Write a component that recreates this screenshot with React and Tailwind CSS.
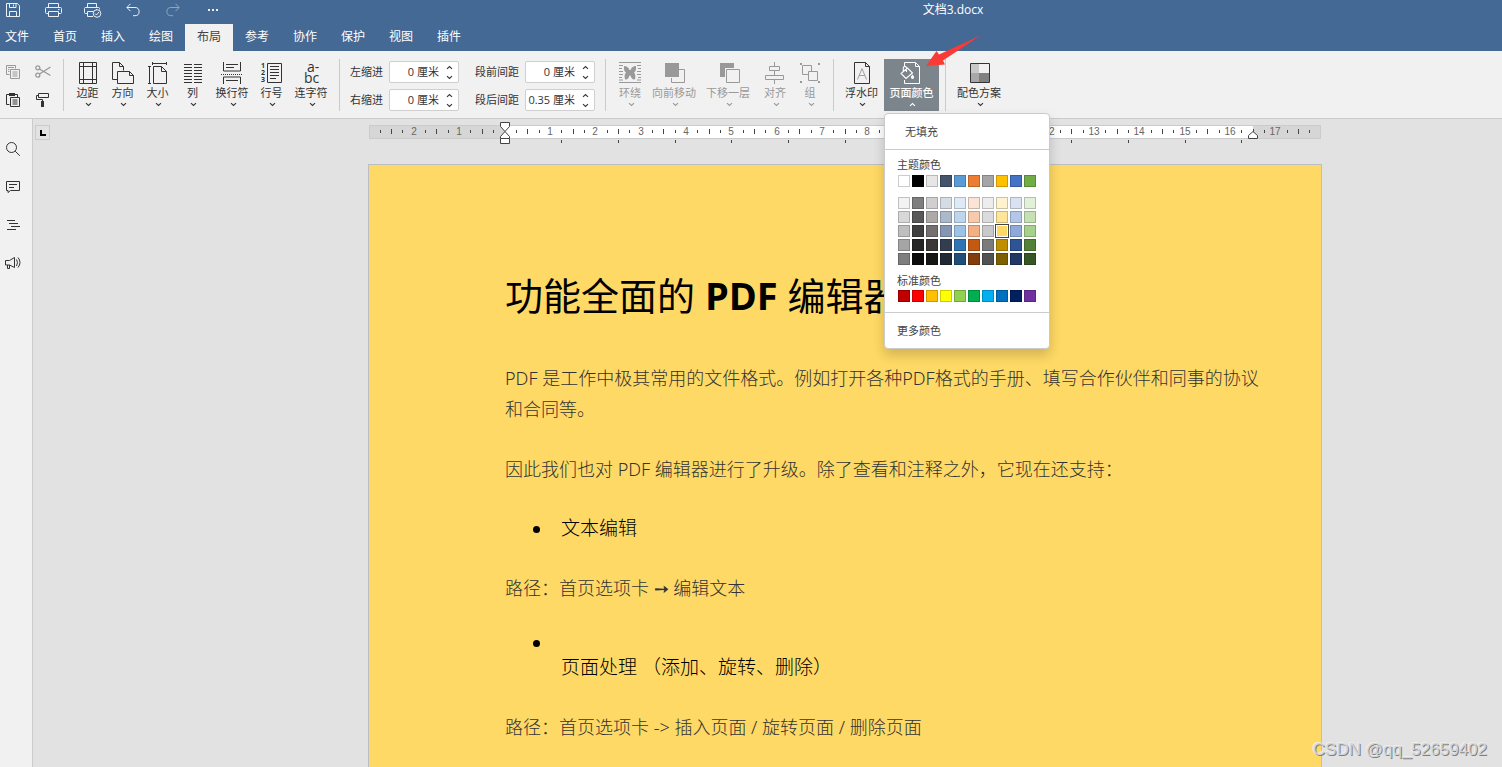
import { useState } from 'react'

const TABS = ['首页', '插入', '绘图', '布局', '参考', '协作', '保护', '视图', '插件']

const THEME_COLORS = ['#ffffff', '#000000', '#e7e6e6', '#44546a', '#5b9bd5', '#ed7d31', '#a5a5a5', '#ffc000', '#4472c4', '#70ad47']

const TINT_COLORS = [
  '#f2f2f2', '#7f7f7f', '#d0cece', '#d5dce4', '#deeaf6', '#fbe4d5', '#ededed', '#fff2cc', '#d9e2f3', '#e2efd9',
  '#d8d8d8', '#595959', '#aeaaaa', '#acb9ca', '#bdd6ee', '#f7caac', '#dbdbdb', '#ffe599', '#b4c6e7', '#c5e0b3',
  '#bfbfbf', '#3f3f3f', '#757070', '#8496b0', '#9cc2e5', '#f4b083', '#c9c9c9', '#ffd965', '#8eaadb', '#a8d08d',
  '#a5a5a5', '#262626', '#3a3838', '#323e4f', '#2e75b5', '#c45911', '#7b7b7b', '#bf8f00', '#2f5496', '#538135',
  '#7f7f7f', '#0c0c0c', '#171616', '#212934', '#1f4e79', '#833c0b', '#525252', '#7f6000', '#1f3864', '#375623',
]

const STANDARD_COLORS = ['#c00000', '#ff0000', '#ffc000', '#ffff00', '#92d050', '#00b050', '#00b0f0', '#0070c0', '#002060', '#7030a0']

function Icon({ w = 24, h = 24, children }) {
  return (
    <svg width={w} height={h} viewBox={`0 0 ${w} ${h}`} fill="none" stroke="currentColor" aria-hidden="true" className="shrink-0 overflow-visible">
      {children}
    </svg>
  )
}

function Chevron({ up }) {
  return (
    <Icon w={7} h={5}>
      <path d={up ? 'M1 3.8 3.5 1.5 6 3.8' : 'M1 1.2 3.5 3.5 6 1.2'} strokeWidth="1.1" />
    </Icon>
  )
}

/* ---------- title bar icons ---------- */

const SaveIcon = () => (
  <Icon w={14} h={14}>
    <path d="M.5.5h10.8l2.2 2.2v10.8H.5zM3.5.5v4h6.5v-4M7.5 1.5v2M3.5 13.5v-5h7v5" />
  </Icon>
)

const PrintIcon = () => (
  <Icon w={17} h={14}>
    <path d="M3.5 4.5v-4h10v4M3.5 10.5h-2a1 1 0 0 1-1-1v-4a1 1 0 0 1 1-1h14a1 1 0 0 1 1 1v4a1 1 0 0 1-1 1h-2M3.5 8.5h10v5h-10zM13 6.5h1.5" />
  </Icon>
)

const PrintCheckIcon = () => (
  <Icon w={18} h={16}>
    <path d="M3.5 5.5v-4h9v4M3.5 11.5h-2a1 1 0 0 1-1-1v-4a1 1 0 0 1 1-1h13a1 1 0 0 1 1 1v1M9 14.5H3.5v-5h6M12 7.5h1" />
    <circle cx="13" cy="11.5" r="3.8" />
    <path d="m11 11.5 1.5 1.5 2.5-3" />
  </Icon>
)

const UndoIcon = () => (
  <Icon w={14} h={14}>
    <path d="M4.5.8.9 4.5l3.6 3.7M1 4.5h8a4 4 0 0 1 0 8.2H7" />
  </Icon>
)

const RedoIcon = () => (
  <Icon w={14} h={14}>
    <path d="m9.5.8 3.6 3.7-3.6 3.7M13 4.5H5a4 4 0 0 0 0 8.2h2" />
  </Icon>
)

const DotsIcon = () => (
  <Icon w={12} h={4}>
    <path d="M1 1h2v2H1zM5 1h2v2H5zM9 1h2v2H9z" fill="currentColor" stroke="none" />
  </Icon>
)

const QUICK_ACTIONS = [
  ['保存', SaveIcon],
  ['打印', PrintIcon],
  ['快速打印', PrintCheckIcon],
  ['撤销', UndoIcon],
  ['重做', RedoIcon],
  ['更多', DotsIcon],
]

/* ---------- clipboard icons ---------- */

const CopyIcon = () => (
  <Icon w={14} h={14}>
    <path d="M3.5 9.5h-3v-9h9v3M2 2.5h6M2 4.5h1.5M2 6.5h1.5M4.5 4.5h9v9h-9zM6.5 7h5M6.5 9h5M6.5 11h5" />
  </Icon>
)

const CutIcon = () => (
  <Icon w={16} h={13}>
    <g strokeWidth="1.3">
      <circle cx="2.8" cy="2.8" r="2" />
      <circle cx="2.8" cy="10.2" r="2" />
      <path d="M4.5 4 15.5 10.5M4.5 9 15.5 2" />
    </g>
  </Icon>
)

const PasteIcon = () => (
  <Icon w={14} h={14}>
    <path d="M3.5 11.5h-3v-10h11v3" />
    <path d="M3 0h6v3H3z" fill="currentColor" stroke="none" />
    <path d="M4.5 4.5h9v9h-9zM6.5 7h5M6.5 9h5M6.5 11h5" />
  </Icon>
)

const BrushIcon = () => (
  <Icon w={14} h={14}>
    <path d="M2.5.5h10v4h-10zM2.5 2.5h-2v4h6v2" />
    <path d="M5 8h3v6H5z" fill="currentColor" stroke="none" />
  </Icon>
)

/* ---------- ribbon icons ---------- */

const MarginsIcon = () => (
  <Icon>
    <path d="M3.5 1.5h17v21h-17zM7.5 1.5v21M16.5 1.5v21M3.5 5.5h17M3.5 18.5h17" />
  </Icon>
)

const OrientationIcon = () => (
  <Icon>
    <path d="M6.5 18.5h-5v-17h7l4 4v4M8.5 1.5v4h4M6.5 10.5h12l4 4v8h-16zM18.5 10.5v4h4" />
  </Icon>
)

const SizeIcon = () => (
  <Icon>
    <path d="M6.5 2.5h14M6.5 1v3M20.5 1v3M3.5 5.5v17M2 5.5h3M2 22.5h3M7.5 5.5h8l5 5v12h-13zM15.5 5.5v5h5" />
  </Icon>
)

const ColumnsIcon = () => (
  <Icon>
    <path d="M3 3.5h8M3 6.5h8M3 9.5h8M3 12.5h8M3 15.5h8M3 18.5h8M3 21.5h8M13 3.5h8M13 6.5h8M13 9.5h8M13 12.5h8M13 15.5h8M13 18.5h8M13 21.5h8" />
  </Icon>
)

const BreaksIcon = () => (
  <Icon>
    <path d="M3.5 1v9h17V1M6 3.5h12M6 6.5h8M3.5 23v-7h17v7M6 19.5h12" />
    <path d="M1 13.5h22" strokeDasharray="1 1" />
  </Icon>
)

const LineNumbersIcon = () => (
  <Icon>
    <path d="M7.5 2.5h14v19h-14zM10 5.5h9M10 8.5h9M10 11.5h9M10 14.5h9M10 17.5h6" />
    <g fill="currentColor" stroke="none" fontSize="7" fontWeight="700" fontFamily="Open Sans, sans-serif">
      <text x="1" y="7">1</text>
      <text x="1" y="14">2</text>
      <text x="1" y="21">3</text>
    </g>
  </Icon>
)

const HyphenIcon = () => (
  <Icon>
    <g fill="currentColor" stroke="none" fontSize="14" fontFamily="Open Sans, sans-serif">
      <text x="8" y="11">a-</text>
      <text x="5" y="22">bc</text>
    </g>
  </Icon>
)

const WrapIcon = () => (
  <Icon>
    <path d="M1 1.5h22M1 21.5h22M1 4.5h4M1 7.5h3M1 10.5h4M1 13.5h4M1 16.5h3M1 19h4M19 4.5h4M20 7.5h3M19 10.5h4M19 13.5h4M20 16.5h3M19 19h4" />
    <path d="M6 5c2.500 0 4.500 1 5.400 4h1.200C13.500 6 15.500 5 18 5c.3 3-.2 5.500-2 6.500 1.600 1.500 1.800 4.500.8 7-2 .3-3.800-1.500-4.300-4h-1c-.5 2.500-2.300 4.300-4.300 4-1-2.500-.8-5.500.8-7C6.200 10.500 5.700 8 6 5z" fill="currentColor" stroke="none" />
  </Icon>
)

const ForwardIcon = () => (
  <Icon>
    <path d="M17 8.5h5.500v13h-13V17" />
    <path d="M3 2h14v14H3z" fill="currentColor" stroke="none" />
  </Icon>
)

const BackwardIcon = () => (
  <Icon>
    <path d="M4 2h14v5H9v9H4z" fill="currentColor" stroke="none" />
    <path d="M10.5 8.5h13v13h-13z" />
  </Icon>
)

const AlignIcon = () => (
  <Icon>
    <path d="M11.5 1v4M11.5 10v4M11.500 19v4M6.5 5.5h10v4h-10zM2.5 14.5h18v4h-18z" />
  </Icon>
)

const GroupIcon = () => (
  <Icon>
    <path d="M10 13.500H4.5v-9h9v5.500M10.5 10.5h9v9h-9z" />
    <path d="M2 2h2v2H2zM20 2h2v2h-2zM2 20h2v2H2zM20 20h2v2h-2z" fill="currentColor" stroke="none" />
  </Icon>
)

const WatermarkIcon = () => (
  <Icon>
    <path d="M4.5 1.5h11l4 4v17h-15zM15.5 1.5v4h4" />
    <path d="M7.500 18.500 12 7.500l4.500 11M9 14.500h6" stroke="#a0a0a0" />
  </Icon>
)

const PageColorIcon = () => (
  <Icon>
    <path d="M4.5 6V1.5h11l4 4v17h-15V19M15.5 1.5v4h4" />
    <path d="M7.500 7 1 12.500l5 5 6.500-5.500zM6.500 11V7a1.600 1.600 0 0 0-3.200 0v3.500" strokeWidth="1.1" />
    <path d="M12.500 13.500c1.300 1.500 1.600 2.200 1.600 2.800a1.600 1.600 0 0 1-3.200 0c0-.6.500-1.300 1.600-2.800z" fill="currentColor" stroke="none" />
  </Icon>
)

const SchemeIcon = () => (
  <Icon>
    <path d="M3 3h9v9H3z" fill="#c8c8c8" stroke="none" />
    <path d="M3 12h9v9H3z" fill="#a8a8a8" stroke="none" />
    <path d="M12 12h10v9H12z" fill="#808080" stroke="none" />
    <path d="M3.5 2.5h19v19h-19z" />
  </Icon>
)

/* ---------- sidebar icons ---------- */

const SearchIcon = () => (
  <Icon w={16} h={16}>
    <circle cx="6.5" cy="6.5" r="5" />
    <path d="m10.2 10.2 4.600 4.600" />
  </Icon>
)

const CommentIcon = () => (
  <Icon w={16} h={16}>
    <path d="M1.5 2.5h13v9h-9l-2.500 2v-2H1.5zM4 5.5h8M4 8.5h5" />
  </Icon>
)

const HeadingsIcon = () => (
  <Icon w={16} h={16}>
    <path d="M2 3.5h8M4 6.5h9M6 9.5h9M2 12.5h9" />
  </Icon>
)

const FeedbackIcon = () => (
  <Icon w={16} h={16}>
    <path d="M.5 5.500h4l5-3v10l-5-2.500h-4zM2.500 10v3.500h2V10M11.500 4.500q2 3 0 6.500M13 2.500q4 5 0 10" />
  </Icon>
)

const SIDE_ITEMS = [
  ['查找', SearchIcon],
  ['批注', CommentIcon],
  ['标题', HeadingsIcon],
  ['反馈和支持', FeedbackIcon],
]

/* ---------- ribbon parts ---------- */

function ToolButton({ icon: Glyph, label, width, disabled, active }) {
  return (
    <button
      disabled={disabled}
      className={`flex h-[52px] flex-col items-center pt-[2px] text-[11px] leading-[14px] whitespace-nowrap ${width} ${
        active ? 'bg-[#7d858c] font-medium text-white' : disabled ? 'text-[#999]' : 'text-[#333]'
      }`}
    >
      <Glyph />
      <span className="mt-px">{label}</span>
      <span className="mt-[2px] ml-[2px]">
        <Chevron up={active} />
      </span>
    </button>
  )
}

function Separator({ className }) {
  return <div className={`h-[52px] w-px shrink-0 bg-[#cbcbcb] ${className}`} />
}

function SpinBox({ id, value }) {
  return (
    <div className="flex h-[22px] w-[70px] rounded-[2px] border border-[#cfcfcf] bg-white">
      <input id={id} type="text" defaultValue={value} className="w-[49px] bg-transparent pt-px text-right text-[11px] outline-none" />
      <div className="flex flex-1 flex-col items-center justify-center gap-[5px] pl-[2px]">
        <button aria-label="增加" className="flex h-[5px]"><Chevron up /></button>
        <button aria-label="减少" className="flex h-[5px]"><Chevron /></button>
      </div>
    </div>
  )
}

function Swatches({ colors, selected, className }) {
  return (
    <div className={`ml-px grid w-[138px] grid-cols-10 gap-[2px] ${className}`}>
      {colors.map((color) => (
        <button
          key={color}
          aria-label={color}
          className={`h-3 w-3 border ${color === selected ? 'border-white outline outline-[#444]' : 'border-black/20'}`}
          style={{ backgroundColor: color }}
        />
      ))}
    </div>
  )
}

function ColorMenu() {
  return (
    <div className="absolute top-[54px] left-0 z-20 w-[166px] rounded-[4px] border border-[#cbcbcb] bg-white text-[11px] text-[#444] shadow-[0_6px_12px_rgba(0,0,0,0.18)]">
      <button className="block h-[35px] w-full pt-px pl-5 text-left">无填充</button>
      <div className="h-px bg-[#cbcbcb]" />
      <div className="px-3 pt-[7px] pb-[10px]">
        <div className="leading-4">主题颜色</div>
        <Swatches colors={THEME_COLORS} className="mt-[2px]" />
        <Swatches colors={TINT_COLORS} selected="#ffd965" className="mt-[10px]" />
        <div className="mt-2 leading-4">标准颜色</div>
        <Swatches colors={STANDARD_COLORS} className="mt-px" />
      </div>
      <div className="h-px bg-[#cbcbcb]" />
      <button className="block h-[35px] w-full pt-px pl-3 text-left">更多颜色</button>
    </div>
  )
}

// Horizontal ruler: zero is at x=136 and one centimetre is 45.35px
function Ruler() {
  const cm = 45.35
  const zero = 136
  const quarters = []
  for (let q = -11; q <= 71; q++) quarters.push(q)
  const stops = []
  for (let s = 1; s <= 13; s++) stops.push(s)

  return (
    <svg width="952" height="30" className="ml-[319px] shrink-0 overflow-visible" fontFamily="Liberation Sans, Arial, sans-serif" fontSize="10">
      <rect x="0.5" y="6.5" width="951" height="13" fill="#d6d6d6" stroke="#cbcbcb" />
      <rect x="136" y="7" width="748" height="12" fill="#fff" />
      {quarters.map((q) => {
        const x = Math.floor(zero + (q * cm) / 4)
        if (q === 0) return null
        if (q % 4 === 0) {
          return <text key={q} x={x} y="16" textAnchor="middle" fill="#666">{Math.abs(q / 4)}</text>
        }
        return q % 2 === 0
          ? <rect key={q} x={x} y="10" width="1" height="5" fill="#444" />
          : <rect key={q} x={x} y="11" width="1" height="3" fill="#444" />
      })}
      {stops.map((s) => (
        <rect key={s} x={Math.floor(zero + s * cm * 1.25)} y="21" width="1" height="3" fill="#444" />
      ))}
      <g fill="#fff" stroke="#444">
        <path d="M131.500 3.500h9v4l-4.500 5-4.500-5z" />
        <path d="M136 12.500l4.500 5v2h-9v-2z" />
        <path d="M131.500 19.500h9v5h-9z" />
        <path d="M884 12.500l4.500 4v3h-9v-3z" />
      </g>
    </svg>
  )
}

export default function App() {
  const [tab, setTab] = useState('布局')

  return (
    <div className="relative flex h-screen flex-col overflow-hidden bg-[#e2e2e2] font-['Open_Sans','Noto_Sans_CJK_SC',sans-serif]">
      {/* Header */}
      <header className="shrink-0 bg-[#446995] text-xs text-white">
        <div className="flex h-6">
          <div className="-ml-[7px] flex h-5">
            {QUICK_ACTIONS.map(([label, Glyph]) => (
              <button key={label} aria-label={label} className={`flex w-10 items-center justify-center ${label === '重做' ? 'opacity-40' : 'opacity-90'}`}>
                <Glyph />
              </button>
            ))}
          </div>
          <div className="flex-1 pl-[171px] text-center leading-5">文档3.docx</div>
        </div>
        <nav className="flex h-[27px] pb-px">
          <button className="w-[41px] pl-[5px] text-left">文件</button>
          {TABS.map((name) => (
            <button key={name} onClick={() => setTab(name)} className={`w-12 ${tab === name ? '-mb-px bg-[#f1f1f1] pb-px text-[#444]' : ''}`}>
              {name}
            </button>
          ))}
        </nav>
      </header>

      {/* Ribbon */}
      <div className="flex h-[68px] shrink-0 border-b border-[#cbcbcb] bg-[#f1f1f1] pt-2 text-[11px] text-[#333]">
        <div className="grid grid-cols-[26px_34px] grid-rows-[25px_25px] gap-y-[3px]">
          <button aria-label="复制" className="flex items-center justify-center text-[#999]"><CopyIcon /></button>
          <button aria-label="剪切" className="flex items-center justify-center text-[#999]"><CutIcon /></button>
          <button aria-label="粘贴" className="flex items-center justify-center"><PasteIcon /></button>
          <button aria-label="复制样式" className="flex items-center justify-center"><BrushIcon /></button>
        </div>
        <Separator className="ml-[3px] mr-[6px]" />
        <ToolButton icon={MarginsIcon} label="边距" width="w-[35px]" />
        <ToolButton icon={OrientationIcon} label="方向" width="w-[35px]" />
        <ToolButton icon={SizeIcon} label="大小" width="w-[35px]" />
        <ToolButton icon={ColumnsIcon} label="列" width="w-[35px]" />
        <ToolButton icon={BreaksIcon} label="换行符" width="w-[44px]" />
        <ToolButton icon={LineNumbersIcon} label="行号" width="w-[35px]" />
        <ToolButton icon={HyphenIcon} label="连字符" width="w-[44px]" />
        <Separator className="ml-[6px] mr-[10px]" />
        <div className="mt-[2px] grid grid-cols-[33px_70px_44px_70px] grid-rows-[22px_22px] items-center gap-y-[6px] whitespace-nowrap">
          <label htmlFor="indent-left" className="pt-px">左缩进</label>
          <div className="ml-[6px]"><SpinBox id="indent-left" value="0 厘米" /></div>
          <label htmlFor="space-before" className="ml-[22px] pt-px">段前间距</label>
          <div className="ml-[28px]"><SpinBox id="space-before" value="0 厘米" /></div>
          <label htmlFor="indent-right" className="pt-px">右缩进</label>
          <div className="ml-[6px]"><SpinBox id="indent-right" value="0 厘米" /></div>
          <label htmlFor="space-after" className="ml-[22px] pt-px">段后间距</label>
          <div className="ml-[28px]"><SpinBox id="space-after" value="0.35 厘米" /></div>
        </div>
        <Separator className="ml-[38px] mr-1" />
        <ToolButton icon={WrapIcon} label="环绕" width="w-[40px]" disabled />
        <ToolButton icon={ForwardIcon} label="向前移动" width="w-[48px]" disabled />
        <ToolButton icon={BackwardIcon} label="下移一层" width="w-[60px]" disabled />
        <ToolButton icon={AlignIcon} label="对齐" width="w-[34px]" disabled />
        <ToolButton icon={GroupIcon} label="组" width="w-[36px]" disabled />
        <Separator className="mx-[5px]" />
        <ToolButton icon={WatermarkIcon} label="浮水印" width="w-[45px]" />
        <div className="relative">
          <ToolButton icon={PageColorIcon} label="页面颜色" width="w-[55px]" active />
          <ColorMenu />
          <svg width="56" height="34" viewBox="0 0 56 34" className="pointer-events-none absolute -top-[25px] left-[41px] z-30" aria-hidden="true">
            <path d="M1 32 11.500 17l2.500 3.500L55.500 1.500 18 26.500l2 4z" fill="#f93a35" />
          </svg>
        </div>
        <Separator className="mx-[6px]" />
        <ToolButton icon={SchemeIcon} label="配色方案" width="w-[54px]" />
      </div>

      <div className="flex min-h-0 flex-1">
        {/* Left panel */}
        <aside className="w-[33px] shrink-0 border-r border-[#cbcbcb] bg-[#f1f1f1] pt-[11px] text-[#333]">
          {SIDE_ITEMS.map(([label, Glyph]) => (
            <button key={label} aria-label={label} className="flex h-[38px] w-[26px] items-center justify-center">
              <Glyph />
            </button>
          ))}
        </aside>

        {/* Document area */}
        <main className="flex min-w-0 flex-1 flex-col">
          <div className="flex h-[45px] shrink-0">
            <button aria-label="制表符" className="mt-[6px] ml-[2px] h-[15px] w-[15px] shrink-0 border border-[#cbcbcb]">
              <Icon w={13} h={13}>
                <path d="M5 4v5h5" strokeWidth="2" stroke="#000" />
              </Icon>
            </button>
            <Ruler />
          </div>

          <article className="mr-[180px] ml-[335px] flex-1 overflow-hidden border border-b-0 border-[#bbbec2] bg-[#ffd965] pt-[102px] pr-[50px] pl-[136px] font-['Noto_Sans','Noto_Sans_CJK_SC',sans-serif] text-[18px] leading-[31px] font-light text-[#333]">
            <h1 className="font-['Open_Sans','Noto_Sans_CJK_SC',sans-serif] text-[38px] leading-[56px] font-normal whitespace-nowrap text-black">
              功能全面的 <b>PDF</b> 编辑器
            </h1>
            <p className="mt-10 whitespace-nowrap">
              PDF 是工作中极其常用的文件格式。例如打开各种PDF格式的手册、填写合作伙伴和同事的协议
              <br />
              和合同等。
            </p>
            <p className="mt-[29px]">因此我们也对 PDF 编辑器进行了升级。除了查看和注释之外，它现在还支持：</p>
            <ul className="mt-7">
              <li className="ml-7 flex gap-[21px] text-[19px] text-black">
                <span className="mt-[13px] h-[7px] w-[7px] rounded-full bg-black" />
                文本编辑
              </li>
            </ul>
            <p className="mt-[29px]">路径：首页选项卡 ➙ 编辑文本</p>
            <ul className="mt-6">
              <li className="ml-7 flex gap-[21px] text-[19px] text-black">
                <span className="mt-[12px] h-[7px] w-[7px] rounded-full bg-black" />
                <span className="pt-6">页面处理 （添加、旋转、删除）</span>
              </li>
            </ul>
            <p className="mt-[29px]">路径：首页选项卡 -&gt; 插入页面 / 旋转页面 / 删除页面</p>
          </article>
        </main>
      </div>

      <div className="absolute right-[15px] bottom-[5px] font-['Liberation_Sans',Arial,sans-serif] text-[17px] leading-6 text-[#d4d4d4] [text-shadow:1px_1px_0_#808080,-1px_-1px_0_#eeeeee]">
        CSDN @qq_52659402
      </div>
    </div>
  )
}
